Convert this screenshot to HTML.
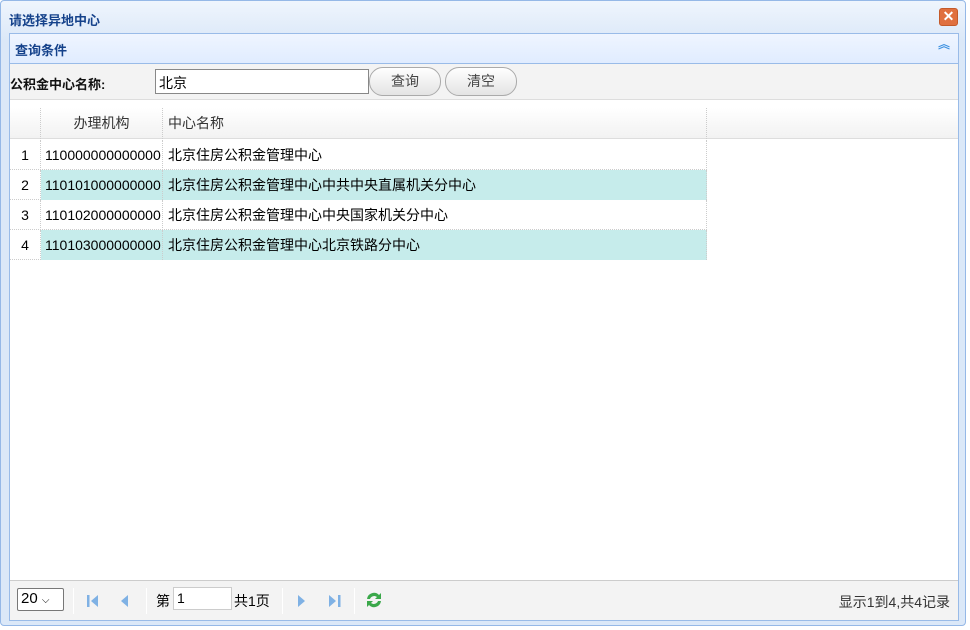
<!DOCTYPE html>
<html><head><meta charset="utf-8"><style>
*{box-sizing:border-box;margin:0;padding:0}
body{width:970px;height:630px;background:#fff;font-family:"Liberation Sans","Noto Sans CJK SC",sans-serif;font-size:13px;color:#000;position:relative;overflow:hidden}
.win{position:absolute;left:0;top:0;width:966px;height:626px;background:linear-gradient(#eff5fd,#dbe8f8 40px,#dbe8f8);border:1px solid #95b8e7;border-radius:4px}
.title{position:absolute;left:8px;top:9px;font-size:13px;color:#15428b;font-weight:bold}
.close{position:absolute;left:938px;top:7px;width:19px;height:18px;background:#e0703f;border:1px solid #c45a2a;border-radius:3px;color:#fff;font-weight:bold;font-size:14px;line-height:15px;text-align:center}
.panel{position:absolute;left:9px;top:33px;width:950px;height:588px;background:#fff;border:1px solid #99bbe8}
.ph{height:30px;background:linear-gradient(#eff5ff,#e0ecff);border-bottom:1px solid #99bbe8;color:#15428b;font-weight:bold;padding:6px 0 0 5px}
.arr{position:absolute;right:8px;top:6px;color:#3a8fe0;font-size:12px;line-height:8px}
.srch{height:36px;background:#f3f3f3;border-bottom:1px solid #ddd;position:relative}
.lbl{position:absolute;left:0;top:10px;font-weight:bold;color:#111}
.inp{position:absolute;left:145px;top:5px;width:214px;height:25px;border:1px solid #888;background:#fff;padding:3px 3px;font-size:14px}
.btn{position:absolute;top:3px;height:29px;border:1px solid #aaa;border-radius:14px;background:linear-gradient(#fff,#e4e4e4);color:#444;text-align:center;line-height:27px;font-size:14px}
.g{position:absolute;left:0;top:74px;width:948px;font-size:14px}
.hdr{position:absolute;top:0;height:31px;width:948px;background:linear-gradient(#fff,#f2f2f2);border-bottom:1px solid #ddd}
.c{position:absolute;height:30px;line-height:30px;white-space:nowrap;overflow:hidden;border-right:1px dotted #ccc}
.row{position:absolute;left:0;width:697px;height:30px;border-bottom:1px dotted #ccc}
.alt .c2,.alt .c3{background:#c6eceb}
.foot{position:absolute;left:0;bottom:0;width:948px;height:40px;background:#f3f3f3;border-top:1px solid #ccc;font-size:14px}
.sep{position:absolute;top:7px;width:1px;height:26px;background:#ccc;border-right:1px solid #fff}
</style></head><body>
<div class="win">
<div class="title">请选择异地中心</div>
<div class="close">✕</div>
</div>
<div class="panel">
<div class="ph">查询条件<div class="arr">︽</div></div>
<div class="srch">
<div class="lbl">公积金中心名称:</div>
<div class="inp">北京</div>
<div class="btn" style="left:359px;width:72px">查询</div>
<div class="btn" style="left:435px;width:72px">清空</div>
</div>
<div class="g">
<div class="hdr">
<div class="c" style="left:0;width:31px;height:31px;border-right:1px dotted #ccc"></div>
<div class="c" style="left:31px;width:122px;height:31px;text-align:center;color:#333">办理机构</div>
<div class="c" style="left:153px;width:544px;height:31px;padding-left:5px;color:#333">中心名称</div>
</div>
<div class="row" style="top:32px"><div class="c" style="left:0;width:31px;text-align:center">1</div><div class="c c2" style="left:31px;width:122px;padding-left:4px">110000000000000</div><div class="c c3" style="left:153px;width:544px;padding-left:5px">北京住房公积金管理中心</div></div>
<div class="row alt" style="top:62px"><div class="c" style="left:0;width:31px;text-align:center">2</div><div class="c c2" style="left:31px;width:122px;padding-left:4px">110101000000000</div><div class="c c3" style="left:153px;width:544px;padding-left:5px">北京住房公积金管理中心中共中央直属机关分中心</div></div>
<div class="row" style="top:92px"><div class="c" style="left:0;width:31px;text-align:center">3</div><div class="c c2" style="left:31px;width:122px;padding-left:4px">110102000000000</div><div class="c c3" style="left:153px;width:544px;padding-left:5px">北京住房公积金管理中心中央国家机关分中心</div></div>
<div class="row alt" style="top:122px"><div class="c" style="left:0;width:31px;text-align:center">4</div><div class="c c2" style="left:31px;width:122px;padding-left:4px">110103000000000</div><div class="c c3" style="left:153px;width:544px;padding-left:5px">北京住房公积金管理中心北京铁路分中心</div></div>
</div>
<div class="foot">
<div style="position:absolute;left:7px;top:7px;width:47px;height:23px;border:1px solid #777;border-radius:2px;background:#fff;font-size:15px;padding:1px 3px">20 <span style="font-size:10px">&#x2335;</span></div>
<div class="sep" style="left:63px"></div>
<svg style="position:absolute;left:76px;top:12px" width="60" height="16"><rect x="1" y="2" width="2.5" height="12" fill="#7fb1e4"/><path d="M12 2 L5 8 L12 14Z" fill="#7fb1e4"/><path d="M42 2 L35 8 L42 14Z" fill="#7fb1e4"/></svg>
<div class="sep" style="left:136px"></div>
<div style="position:absolute;left:146px;top:10px">第</div>
<div style="position:absolute;left:163px;top:6px;width:59px;height:23px;border:1px solid #ccc;background:#fff;padding:2px 3px;font-size:14px">1</div>
<div style="position:absolute;left:224px;top:10px">共1页</div>
<div class="sep" style="left:272px"></div>
<svg style="position:absolute;left:285px;top:12px" width="60" height="16"><path d="M3 2 L10 8 L3 14Z" fill="#7fb1e4"/><path d="M34 2 L41 8 L34 14Z" fill="#7fb1e4"/><rect x="43" y="2" width="2.5" height="12" fill="#7fb1e4"/></svg>
<div class="sep" style="left:344px"></div>
<svg style="position:absolute;left:354px;top:9px" width="20" height="20"><path d="M3 9 A7 7 0 0 1 15 5 L17 3 L17 9 L11 9 L13 7 A4.5 4.5 0 0 0 6 9Z" fill="#3aa84a"/><path d="M17 11 A7 7 0 0 1 5 15 L3 17 L3 11 L9 11 L7 13 A4.5 4.5 0 0 0 14 11Z" fill="#3aa84a"/></svg>
<div style="position:absolute;right:8px;top:11px;color:#333">显示1到4,共4记录</div>
</div>
</div>
</body></html>
